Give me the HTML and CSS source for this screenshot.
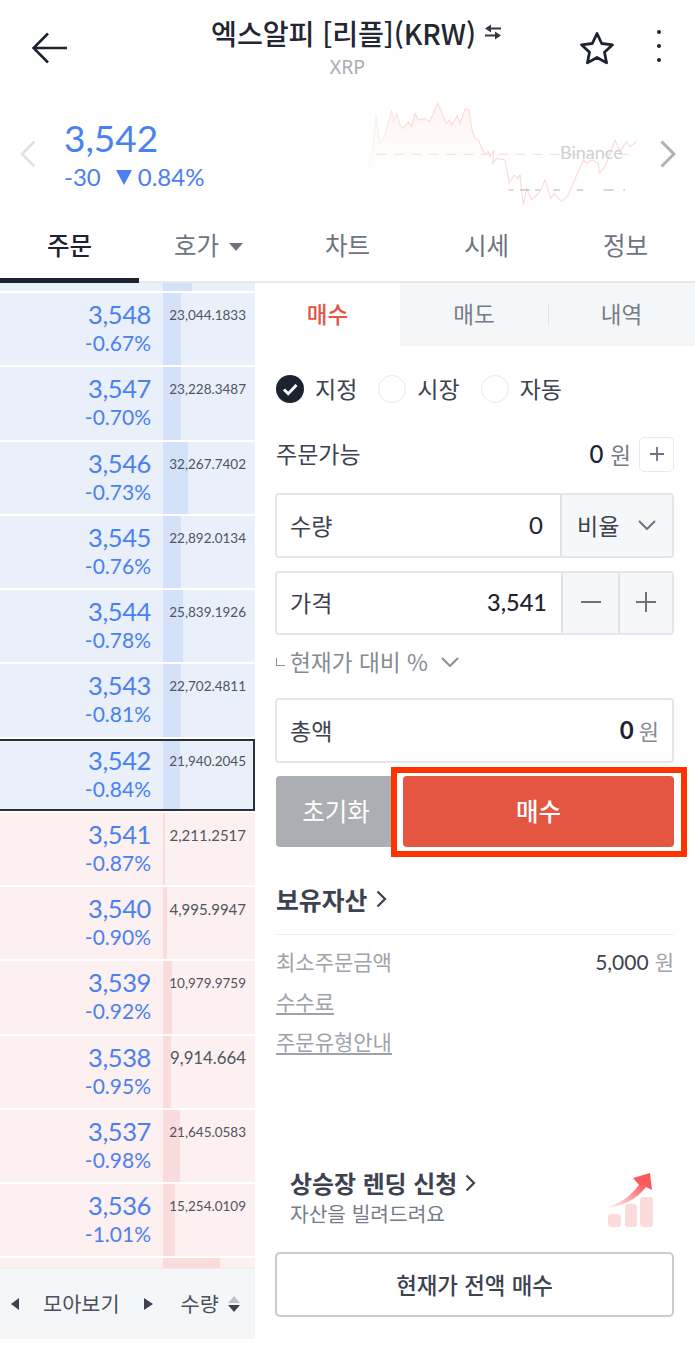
FILE: index.html
```html
<!DOCTYPE html>
<html lang="ko">
<head>
<meta charset="utf-8">
<title>XRP</title>
<link rel="stylesheet" href="styles.css">
</head>
<body>
<header class="topbar">
  <svg class="back" viewBox="0 0 36 32"><path d="M35 16H2M16 1.500 1.500 16 16 30.500" fill="none" stroke="#1c2230" stroke-width="2.600"/></svg>
  <div class="title-block">
    <div class="title"><span>엑스알피 [리플](KRW)</span>
      <svg class="swap" viewBox="0 0 16 16"><path d="M0 4.500 6 .5v3h10v2H6v3zM16 11.500 10 15.500v-3H0v-2h10v-3z" fill="#33394a"/></svg>
    </div>
    <div class="subtitle">XRP</div>
  </div>
  <svg class="star" viewBox="0 0 36 34"><path d="M18 2.500l4.700 10 10.800 1.300-8 7.400 2.100 10.700L18 26.500 8.400 31.900l2.100-10.700-8-7.400 10.800-1.300z" fill="none" stroke="#1c2230" stroke-width="2.800" stroke-linejoin="round"/></svg>
  <div class="dots"><i></i><i></i><i></i></div>
</header>

<section class="summary">
  <svg class="chev-left" viewBox="0 0 16 28"><path d="M14.500 1.500 2 14l12.500 12.500" fill="none" stroke="#dfe1e4" stroke-width="2.500"/></svg>
  <div class="quote">
    <div class="quote-price">3,542</div>
    <div class="quote-change"><span>-30</span><i class="tri"></i><span>0.84%</span></div>
  </div>
  <div class="chart">
    <svg viewBox="0 0 870 360">
      <defs>
        <linearGradient id="fade" x1="0" y1="0" x2="0" y2="1"><stop offset="0" stop-color="#fce4e0" stop-opacity=".4"/><stop offset="1" stop-color="#fce4e0" stop-opacity="0"/></linearGradient>
        <linearGradient id="line" gradientUnits="userSpaceOnUse" x1="20" y1="0" x2="170" y2="0"><stop offset="0" stop-color="#fbe0dc" stop-opacity="0"/><stop offset="1" stop-color="#fbdcd8"/></linearGradient>
      </defs>
      <path d="M30 178 45 180 58 215 70 150 78 60 90 145 105 120 125 45 130 80 140 55 150 90 160 100 175 80 185 95 195 55 205 75 225 70 238 80 250 55 263 25 275 50 288 85 298 75 305 90 322 62 330 85 345 42 357 45 365 100 375 130 385 135 405 178 V230 H30Z" fill="url(#fade)"/>
      <path d="M80 178H860" fill="none" stroke="#fce2de" stroke-width="4" stroke-dasharray="30 22"/>
      <path d="M30 178 45 180 58 215 70 150 78 60 90 145 105 120 125 45 130 80 140 55 150 90 160 100 175 80 185 95 195 55 205 75 225 70 238 80 250 55 263 25 275 50 288 85 298 75 305 90 322 62 330 85 345 42 357 45 365 100 375 130 385 135 405 180 415 170 420 185 432 165 428 205 440 190 465 195 478 265 492 240 505 250 510 238 520 330 530 280 545 315 560 300 570 290 585 255 603 310 612 295 635 320 655 300 680 240 700 195 710 205 725 195 745 205 748 235 765 215 795 135 810 170 830 140 840 155 860 140" fill="none" stroke="url(#line)" stroke-width="3.500"/>
      <path d="M476 285H825" fill="none" stroke="#a0a3a8" stroke-width="2.500" stroke-dasharray="14 20 30 15 15 40 20 50 20 60 30 30 5 10"/>
    </svg>
    <span class="chart-label">Binance</span>
  </div>
  <svg class="chev-right" viewBox="0 0 16 28"><path d="M1.500 1.500 14 14 1.500 26.500" fill="none" stroke="#aeb1b6" stroke-width="3"/></svg>
</section>

<nav class="tabs">
  <a class="tab active">주문</a>
  <a class="tab">호가 <b class="tab-caret"></b></a>
  <a class="tab">차트</a>
  <a class="tab">시세</a>
  <a class="tab">정보</a>
</nav>

<main class="body">
  <section class="book">
    <div class="book-list">
      <div class="book-inner">
        <div class="row ask"><i class="bar" style="width:29px"></i></div>
        <div class="row ask"><i class="bar" style="width:18px"></i><div class="px"><b>3,548</b><span>-0.67%</span></div><div class="qty">23,044.1833</div></div>
        <div class="row ask"><i class="bar" style="width:18px"></i><div class="px"><b>3,547</b><span>-0.70%</span></div><div class="qty">23,228.3487</div></div>
        <div class="row ask"><i class="bar" style="width:25px"></i><div class="px"><b>3,546</b><span>-0.73%</span></div><div class="qty">32,267.7402</div></div>
        <div class="row ask"><i class="bar" style="width:18px"></i><div class="px"><b>3,545</b><span>-0.76%</span></div><div class="qty">22,892.0134</div></div>
        <div class="row ask"><i class="bar" style="width:20px"></i><div class="px"><b>3,544</b><span>-0.78%</span></div><div class="qty">25,839.1926</div></div>
        <div class="row ask"><i class="bar" style="width:18px"></i><div class="px"><b>3,543</b><span>-0.81%</span></div><div class="qty">22,702.4811</div></div>
        <div class="row ask current"><i class="bar" style="width:17px"></i><div class="px"><b>3,542</b><span>-0.84%</span></div><div class="qty">21,940.2045</div></div>
        <div class="row bid"><i class="bar" style="width:2px"></i><div class="px"><b>3,541</b><span>-0.87%</span></div><div class="qty qty-m">2,211.2517</div></div>
        <div class="row bid"><i class="bar" style="width:4px"></i><div class="px"><b>3,540</b><span>-0.90%</span></div><div class="qty qty-m">4,995.9947</div></div>
        <div class="row bid"><i class="bar" style="width:9px"></i><div class="px"><b>3,539</b><span>-0.92%</span></div><div class="qty">10,979.9759</div></div>
        <div class="row bid"><i class="bar" style="width:8px"></i><div class="px"><b>3,538</b><span>-0.95%</span></div><div class="qty qty-l">9,914.664</div></div>
        <div class="row bid"><i class="bar" style="width:17px"></i><div class="px"><b>3,537</b><span>-0.98%</span></div><div class="qty">21,645.0583</div></div>
        <div class="row bid"><i class="bar" style="width:12px"></i><div class="px"><b>3,536</b><span>-1.01%</span></div><div class="qty">15,254.0109</div></div>
        <div class="row bid"><i class="bar" style="width:57px"></i></div>
      </div>
    </div>
    <div class="book-foot">
      <i class="arrow-l"></i><span class="foot-label">모아보기</span><i class="arrow-r"></i>
      <span class="foot-unit">수량</span>
      <span class="updown"><i class="up"></i><i class="down"></i></span>
    </div>
  </section>

  <section class="order">
    <div class="order-tabs">
      <a class="otab on">매수</a>
      <a class="otab">매도</a>
      <a class="otab sep">내역</a>
    </div>
    <div class="form">
      <div class="types">
        <span class="type"><span class="radio checked"><svg viewBox="0 0 28 28"><path d="M8 14.500l4.200 4.200L20.500 10" fill="none" stroke="#fff" stroke-width="3"/></svg></span><span class="type-text">지정</span></span>
        <span class="type"><span class="radio"></span><span class="type-text">시장</span></span>
        <span class="type"><span class="radio"></span><span class="type-text">자동</span></span>
      </div>
      <div class="avail">
        <span class="avail-label">주문가능</span>
        <span class="avail-val"><b class="num">0</b><em>원</em></span>
        <span class="plus-box"><svg viewBox="0 0 16 16"><path d="M8 1v14M1 8h14" stroke="#6d7480" stroke-width="1.800"/></svg></span>
      </div>
      <div class="field">
        <span class="f-label">수량</span><span class="f-val qty-val num">0</span>
        <span class="f-side wide">비율<svg class="chev-d" viewBox="0 0 18 10"><path d="M1 1l8 8 8-8" fill="none" stroke="#6d7480" stroke-width="2"/></svg></span>
      </div>
      <div class="field gap-price">
        <span class="f-label">가격</span><span class="f-val price-val num">3,541</span>
        <span class="f-side step"><svg viewBox="0 0 22 22"><path d="M1 11h20" stroke="#6d7480" stroke-width="2"/></svg></span>
        <span class="f-side step last"><svg viewBox="0 0 22 22"><path d="M11 1v20M1 11h20" stroke="#6d7480" stroke-width="2"/></svg></span>
      </div>
      <div class="hint"><i class="corner"></i>현재가 대비 %<svg class="chev-d" viewBox="0 0 18 10"><path d="M1 1l8 8 8-8" fill="none" stroke="#8a9099" stroke-width="2"/></svg></div>
      <div class="field total">
        <span class="f-label">총액</span><span class="f-val"><b class="num">0</b><em>원</em></span>
      </div>
      <div class="actions">
        <button class="btn reset">초기화</button>
        <div class="buy-wrap">
          <i class="mark"></i>
          <button class="btn buy">매수</button>
        </div>
      </div>
      <h3 class="assets">보유자산<svg class="chev-r" viewBox="0 0 11 18"><path d="M1.500 1.500 9 9l-7.500 7.500" fill="none" stroke="#3c4250" stroke-width="2.200"/></svg></h3>
      <div class="info-row"><span>최소주문금액</span><span class="min-val"><span class="num">5,000</span><em>원</em></span></div>
      <a class="link first">수수료</a>
      <a class="link">주문유형안내</a>
      <div class="promo">
        <div>
          <div class="promo-title">상승장 렌딩 신청<svg class="chev-r" viewBox="0 0 11 18"><path d="M1.500 1.500 9 9l-7.500 7.500" fill="none" stroke="#3c4250" stroke-width="2.200"/></svg></div>
          <div class="promo-sub">자산을 빌려드려요</div>
        </div>
        <svg class="promo-icon" viewBox="0 0 50 56">
          <defs><linearGradient id="rise" x1="0" y1="1" x2="1" y2="0"><stop offset="0" stop-color="#fb5a5a" stop-opacity="0"/><stop offset=".75" stop-color="#fb5a5a"/></linearGradient></defs>
          <rect x="4" y="43" width="13" height="13" rx="3" fill="#fbdcdb"/>
          <rect x="21" y="33" width="12" height="23" rx="3" fill="#fbdcdb"/>
          <rect x="36" y="26" width="13" height="30" rx="3" fill="#fbdcdb"/>
          <path d="M0 37C16 33 26 26 35 14L29 7 46 2 48 19 42 16C33 28 18 36 0 37Z" fill="url(#rise)"/>
        </svg>
      </div>
      <button class="all-in">현재가 전액 매수</button>
    </div>
  </section>
</main>
</body>
</html>
```

FILE: styles.css
```css
* { box-sizing: border-box; }
html, body { margin: 0; padding: 0; }
body {
  width: 695px;
  height: 1350px;
  overflow: hidden;
  background: #fff;
  color: #1c2230;
  font-family: "Noto Sans CJK KR", "Noto Sans", sans-serif;
}
i, em { font-style: normal; }
a { display: block; }
button { font-family: inherit; padding: 0; }
.num { font-family: Lato, "Noto Sans", sans-serif; }

/* top bar */
.topbar { height: 97px; display: flex; padding-left: 32px; position: relative; }
.back { width: 36px; height: 32px; margin-top: 32px; flex: none; }
.title-block { flex: none; width: 512px; text-align: center; padding-top: 13px; padding-left: 64px; }
.title { display: flex; justify-content: center; align-items: center; height: 38px; font-size: 28.200px; font-weight: 500; color: #222733; letter-spacing: -0.1px; }
.swap { width: 16px; height: 16px; margin-left: 9px; flex: none; }
.subtitle { font-family: "Noto Sans", sans-serif; font-size: 19.500px; line-height: 24px; margin-top: 4px; padding-right: 17px; color: #a9adb3; }
.star { width: 36px; height: 34px; margin-top: 31px; flex: none; margin-left: -1px; }
.dots { margin-top: 30px; margin-left: 42px; display: flex; flex-direction: column; gap: 10px; }
.dots i { width: 4px; height: 4px; border-radius: 50%; background: #1c2230; display: block; }

/* quote summary */
.summary { height: 118px; display: flex; padding-left: 20px; position: relative; }
.chev-left { width: 16px; height: 28px; margin-top: 43px; flex: none; }
.quote { margin-left: 28px; padding-top: 18px; width: 286px; flex: none; color: #4a80f0; }
.quote-price { font-family: Lato, sans-serif; font-size: 37px; line-height: 46px; }
.quote-change { font-family: Lato, sans-serif; font-size: 24px; line-height: 28px; margin-top: 2px; display: flex; align-items: center; }
.tri { width: 0; height: 0; border-left: 8px solid transparent; border-right: 8px solid transparent; border-top: 15px solid #4a80f0; margin: 0 6px 0 15px; }
.chart { position: relative; width: 290px; height: 118px; flex: none; margin-top: -2px; }
.chart svg { width: 290px; height: 120px; display: block; }
.chart-label { position: absolute; left: 210px; top: 46px; font-family: Lato, sans-serif; font-size: 18px; line-height: 22px; color: #cfd0d2; }
.chev-right { width: 16px; height: 28px; margin: 43px 0 0 20px; flex: none; }

/* tabs */
.tabs { height: 68px; display: flex; border-bottom: 2px solid #e6e8eb; }
.tab { width: 139px; text-align: center; font-size: 24.500px; line-height: 30px; padding-top: 15px; color: #6d7480; height: 68px; }
.tab.active { color: #1c2230; font-weight: 500; border-bottom: 5px solid #1c2230; }
.tab-caret { display: inline-block; width: 0; height: 0; border: 7px solid transparent; border-top: 8px solid #6d7480; border-bottom: 0; vertical-align: 4px; margin-left: 3px; }

/* layout */
.body { display: flex; align-items: flex-start; }

/* order book */
.book { width: 255px; flex: none; }
.book-list { height: 985px; overflow: hidden; }
.book-inner { margin-top: -64.25px; display: flex; flex-direction: column; gap: 2px; }
.row { height: 72.25px; flex: none; display: flex; position: relative; }
.ask { background: #e9f0f9; }
.bid { background: #fdf0f0; }
.bar { position: absolute; left: 163px; top: 0; bottom: 0; }
.ask .bar { background: #d3e2f8; }
.bid .bar { background: #fbdcdc; }
.current::after { content: ""; position: absolute; inset: 0; border: 2px solid #2a2f3a; border-left: 0; }
.px { width: 151px; flex: none; text-align: right; color: #4a80f0; font-family: Lato, sans-serif; padding-top: 4px; position: relative; }
.px b { display: block; font-weight: 400; font-size: 25.500px; line-height: 34px; letter-spacing: -0.4px; }
.px span { display: block; font-size: 21px; line-height: 23px; }
.qty { position: absolute; right: 9px; top: 12px; font-family: Lato, sans-serif; font-size: 13.500px; line-height: 20px; color: #50555f; }
.qty-m { font-size: 15px; }
.qty-l { font-size: 16.800px; }
.book-foot { height: 71px; background: #f5f6f8; border-top: 1px solid #eceef0; display: flex; align-items: center; padding-left: 11px; font-size: 20.800px; color: #4a4f5b; }
.arrow-l { border: 6px solid transparent; border-right: 8px solid #3c4250; border-left: 0; }
.arrow-r { border: 6px solid transparent; border-left: 9px solid #3c4250; border-right: 0; margin-left: 24px; }
.foot-label { margin: -3px 0 0 24px; }
.foot-unit { margin: -3px 0 0 28px; }
.updown { margin-left: 9px; display: flex; flex-direction: column; gap: 2px; }
.up { border: 6px solid transparent; border-bottom: 7px solid #bfc2c7; border-top: 0; }
.down { border: 6px solid transparent; border-top: 7px solid #3c4250; border-bottom: 0; }

/* order panel */
.order { flex: 1; }
.order-tabs { height: 63px; display: flex; background: #f5f6f8; }
.otab { flex: none; text-align: center; font-size: 22.500px; line-height: 28px; padding-top: 16px; color: #767c87; position: relative; }
.otab:nth-child(1) { width: 145px; }
.otab:nth-child(2) { width: 148px; }
.otab:nth-child(3) { width: 147px; }
.otab.on { background: #fff; color: #e45542; font-weight: 500; }
.sep::before { content: ""; position: absolute; left: 0; top: 22px; height: 20px; width: 1px; background: #dfe1e4; }
.form { padding: 0 21px 0 20px; }
.types { display: flex; align-items: center; height: 28px; margin-top: 29px; padding-left: 1px; }
.type { display: flex; align-items: center; font-size: 23px; color: #3c4250; margin-right: 21px; line-height: 28px; }
.type-text { margin-top: -2px; }
.radio { width: 28px; height: 28px; border-radius: 50%; border: 1.500px solid #e6e8eb; margin-right: 11px; display: block; background: #fff; flex: none; }
.radio.checked { background: #1c2230; border: 0; }
.radio svg { display: block; width: 28px; height: 28px; }
.avail { display: flex; align-items: center; margin-top: 33px; height: 36px; padding-left: 1px; }
.avail-label { font-size: 23px; line-height: 36px; color: #3c4250; margin: -2px auto 0 0; }
.avail-val { font-size: 22.500px; line-height: 36px; display: flex; align-items: center; }
.avail-val .num { font-weight: 500; font-size: 24px; color: #1c2230; }
.avail-val em { margin-left: 7px; color: #767c87; }
.plus-box { width: 35px; height: 35px; border: 1.500px solid #e6e8eb; border-radius: 5px; margin-left: 8px; display: flex; align-items: center; justify-content: center; }
.plus-box svg { width: 16px; height: 16px; }
.field { height: 65px; border: 2px solid #e4e6e9; border-radius: 4px; display: flex; align-items: center; margin-top: 20px; overflow: hidden; }
.avail + .field { margin-top: 21px; }
.gap-price { margin-top: 13px; height: 64px; }
.f-label { font-size: 23px; line-height: 30px; color: #3c4250; padding-left: 13px; margin-top: -2px; }
.f-val { margin: -2px 0 0 auto; font-size: 24px; line-height: 30px; color: #1c2230; padding-right: 14px; display: flex; align-items: center; }
.qty-val { padding-right: 17px; }
.price-val { font-size: 23.500px; font-weight: 500; padding-right: 14px; }
.f-side { background: #f6f7f9; border-left: 2px solid #e0e2e5; height: 100%; display: flex; align-items: center; justify-content: center; flex: none; color: #3c4250; font-size: 23px; padding-bottom: 2px; }
.f-side.wide { width: 112px; gap: 19px; justify-content: flex-start; padding-left: 15px; }
.f-side.step { width: 57px; }
.f-side.step.last { width: 54px; }
.f-side.step svg { width: 22px; height: 22px; }
.chev-d { width: 18px; height: 10px; flex: none; }
.hint { display: flex; align-items: center; height: 28px; margin-top: 13px; font-size: 22.700px; line-height: 28px; color: #858b94; padding-left: 1px; }
.corner { width: 9px; height: 8px; border-left: 1.500px solid #8a9099; border-bottom: 1.500px solid #8a9099; margin-right: 5px; }
.hint .chev-d { margin-left: 13px; }
.field.total { margin-top: 22px; }
.total .f-val { padding-right: 13px; }
.total .num { font-weight: 700; }
.total em { font-size: 22px; color: #858b94; margin-left: 5px; }
.actions { display: flex; margin-top: 13px; height: 71px; padding-left: 1px; }
.btn { border: 0; border-radius: 4px; color: #fff; font-size: 24.500px; height: 71px; display: block; padding-bottom: 2px; }
.reset { width: 120px; background: #abaeb3; flex: none; }
.buy-wrap { position: relative; margin-left: 7px; width: 271px; flex: none; }
.buy { width: 271px; background: #e45542; position: relative; font-weight: 500; }
.mark { position: absolute; left: -12px; right: -13px; top: -9px; bottom: -10px; border: 6px solid #ff3300; background: #fff; }
.assets { margin: 37px 0 0 1px; height: 51px; font-size: 24.800px; line-height: 30px; font-weight: 700; color: #3c4250; border-bottom: 1.500px solid #eef0f2; display: flex; align-items: flex-start; }
.assets .chev-r { margin: 6px 0 0 9px; }
.chev-r { width: 11px; height: 18px; flex: none; }
.info-row { display: flex; justify-content: space-between; margin: 11px 0 0 1px; font-size: 21px; line-height: 30px; color: #9ea3aa; }
.min-val .num { color: #3c4250; font-size: 21px; }
.min-val em { margin-left: 6px; }
.link { margin: 10px 0 0 1px; font-size: 21px; line-height: 30px; width: fit-content; color: #9ea3aa; text-decoration: underline; text-underline-offset: 3px; }
.link.first { margin-top: 9px; }
.promo { display: flex; justify-content: space-between; margin-top: 108px; height: 88px; padding-left: 15px; padding-right: 20px; }
.promo-title { font-size: 23.900px; line-height: 30px; font-weight: 700; color: #3c4250; display: flex; align-items: center; margin-top: 4px; }
.promo-title .chev-r { margin-left: 8px; }
.promo-sub { font-size: 20.300px; line-height: 28px; color: #767c87; margin-top: 1px; }
.promo-icon { width: 50px; height: 56px; flex: none; margin-top: 7px; }
.all-in { display: block; width: 399px; height: 65px; background: #fff; border: 2px solid #c8cbd0; border-radius: 5px; font-size: 22.400px; font-weight: 500; color: #3c4250; padding-bottom: 2px; }
```
